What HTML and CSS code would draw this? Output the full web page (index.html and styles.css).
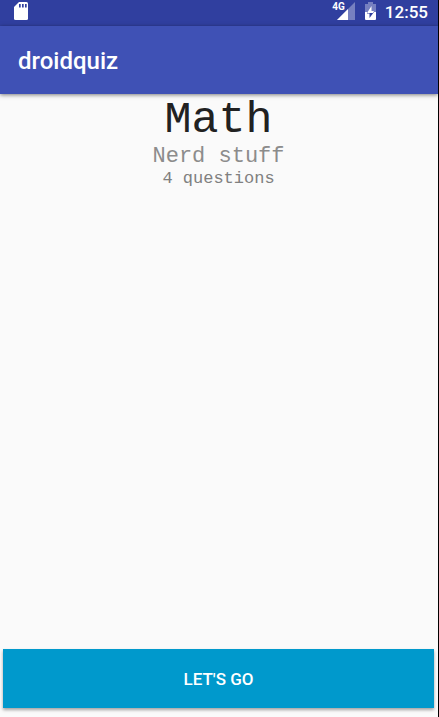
FILE: index.html
```html
<!DOCTYPE html>
<html lang="en">
<head>
<meta charset="utf-8">
<meta name="viewport" content="width=device-width, initial-scale=1">
<title>droidquiz</title>
<link rel="stylesheet" href="styles.css">
</head>
<body>
<div class="screen">
  <div class="status-bar">
    <svg class="sd-icon" width="14" height="18" viewBox="0 0 14 18" aria-hidden="true">
      <path fill="#fff" d="M5 0h7.500Q14 0 14 1.500v15Q14 18 12.500 18h-11Q0 18 0 16.500V5z"/>
      <path fill="#303f9f" d="M5 2h1.700v3.500H5zM8 2h1.700v3.500H8zM11 2h1.700v3.500H11z"/>
    </svg>
    <div class="status-end">
      <span class="network">4G</span>
      <svg class="signal-icon" width="18" height="18" viewBox="0 0 18 18" aria-hidden="true">
        <path fill="#7680c0" d="M18 0v18H0z"/>
        <path fill="#fff" d="M11 7v11H0z"/>
      </svg>
      <svg class="battery-icon" width="11" height="18" viewBox="0 0 11 18" aria-hidden="true">
        <path fill="#7680c0" d="M3 0h5v2h3v8H0V2h3z"/>
        <path fill="#fff" d="M0 10h11v7q0 1-1 1H1q-1 0-1-1z"/>
        <path fill="#303f9f" d="M4.500 16v-4.500H2V10h7z"/>
        <path fill="#fff" d="M6.500 4v5H9l-1 2H2z"/>
      </svg>
      <span class="clock">12:55</span>
    </div>
  </div>
  <header class="app-bar">droidquiz</header>
  <main class="quiz">
    <h1 class="title">Math</h1>
    <p class="subtitle">Nerd stuff</p>
    <p class="count">4 questions</p>
    <button class="start" type="button">LET'S GO</button>
  </main>
</div>
</body>
</html>
```
FILE: styles.css
```css
* {
  box-sizing: border-box;
}

body {
  margin: 0;
  background: #fafafa;
  font-family: Roboto, sans-serif;
}

.screen {
  display: flex;
  flex-direction: column;
  min-height: 100vh;
  border-right: 1px solid #000;
}

.status-bar {
  display: flex;
  justify-content: space-between;
  height: 26px;
  padding: 2px 10px 0 14px;
  background: #303f9f;
  color: #fff;
}

.status-end {
  display: flex;
}

.network {
  font-size: 10px;
  font-weight: 700;
  line-height: 10px;
}

.signal-icon {
  margin: 0 10px 0 -8px;
}

.battery-icon {
  margin-right: 9px;
}

.clock {
  font-size: 17px;
  font-weight: 500;
  line-height: 20px;
}

.app-bar {
  padding: 2px 18px 0;
  background: #3f51b5;
  box-shadow: 0 1px 4px rgba(0, 0, 0, 0.5);
  color: #fff;
  font-size: 24px;
  font-weight: 500;
  line-height: 66px;
}

.quiz {
  display: flex;
  flex: 1;
  flex-direction: column;
  padding: 3px 4px 9px 3px;
  font-family: "Liberation Mono", monospace;
  text-align: center;
}

.title,
.subtitle,
.count {
  margin: 0;
  font-weight: 400;
}

.title {
  color: #212121;
  font-size: 45px;
  line-height: 48px;
}

.subtitle {
  color: #8c8c8c;
  font-size: 22px;
  line-height: 24px;
}

.count {
  color: #808080;
  font-size: 17px;
  line-height: 20px;
}

.start {
  height: 59px;
  margin-top: auto;
  border: 0;
  background: #0099cc;
  box-shadow: 0 2px 3px rgba(0, 0, 0, 0.35);
  color: #fff;
  font-family: Roboto, sans-serif;
  font-size: 17px;
  font-weight: 500;
}
```
